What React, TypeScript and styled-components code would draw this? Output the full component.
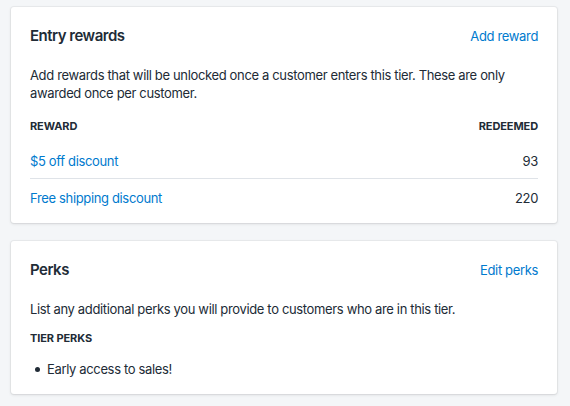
import React from "react";
import styled, { createGlobalStyle } from "styled-components";

const Global = createGlobalStyle`
  html, body { margin: 0; padding: 0; background: #f4f6f8; }
  body { font-family: Inter, "Noto Sans", sans-serif; color: #212b36; -webkit-font-smoothing: antialiased; }
`;

const Page = styled.div`
  display: flex;
  flex-direction: column;
  gap: 18px;
  padding: 7px 13px 12px 11px;
`;

const Card = styled.section<{ $bottom: number }>`
  background: #fff;
  border-radius: 3px;
  box-shadow: 0 0 0 1px rgba(63, 63, 68, 0.05), 0 1px 3px 0 rgba(63, 63, 68, 0.15);
  padding: 20px 19px ${(p) => p.$bottom}px 19px;
`;

const Header = styled.div`
  display: flex;
  justify-content: space-between;
  align-items: center;
  height: 18px;
`;

const Title = styled.h2`
  margin: 0;
  font-size: 15px;
  font-weight: 600;
  line-height: 18px;
  letter-spacing: -0.5px;
`;

const Link = styled.a`
  color: #007ace;
  font-size: 13px;
  line-height: 18px;
  letter-spacing: -0.35px;
  text-decoration: none;
  cursor: pointer;
`;

const Text = styled.p<{ $top: number }>`
  margin: ${(p) => p.$top}px 0 0;
  font-size: 13px;
  line-height: 18px;
  letter-spacing: -0.35px;
  color: #212b36;
`;

const Subheading = styled.div<{ $top: number }>`
  margin-top: ${(p) => p.$top}px;
  display: flex;
  justify-content: space-between;
  font-size: 11px;
  font-weight: 700;
  letter-spacing: -0.1px;
  line-height: 16px;
  text-transform: uppercase;
`;

const Rows = styled.div`
  margin-top: 10px;
  display: flex;
  flex-direction: column;
`;

const Row = styled.div`
  display: flex;
  justify-content: space-between;
  align-items: center;
  padding: 8px 0 8px;
  font-size: 13px;
  line-height: 18px;
  & + & {
    border-top: 1px solid #dfe3e8;
    padding-top: 10px;
  }
`;

const Value = styled.span`
  color: #212b36;
  letter-spacing: -0.35px;
`;

const List = styled.ul`
  list-style: none;
  margin: 14px 0 0;
  padding: 0;
`;

const Item = styled.li`
  display: flex;
  align-items: center;
  gap: 7px;
  padding-left: 5px;
  font-size: 13px;
  line-height: 18px;
  letter-spacing: -0.35px;
  &::before {
    content: "";
    width: 5px;
    height: 5px;
    border-radius: 50%;
    background: #212b36;
  }
`;

const rewards = [
  { name: "$5 off discount", redeemed: 93 },
  { name: "Free shipping discount", redeemed: 220 },
];

export default function App() {
  return (
    <>
      <Global />
      <Page>
        <Card $bottom={8}>
          <Header>
            <Title>Entry rewards</Title>
            <Link>Add reward</Link>
          </Header>
          <Text $top={21}>
            Add rewards that will be unlocked once a customer enters this tier. These are only
            awarded once per customer.
          </Text>
          <Subheading $top={16}>
            <span>Reward</span>
            <span>Redeemed</span>
          </Subheading>
          <Rows>
            {rewards.map((r) => (
              <Row key={r.name}>
                <Link>{r.name}</Link>
                <Value>{r.redeemed}</Value>
              </Row>
            ))}
          </Rows>
        </Card>
        <Card $bottom={16}>
          <Header>
            <Title>Perks</Title>
            <Link>Edit perks</Link>
          </Header>
          <Text $top={21}>
            List any additional perks you will provide to customers who are in this tier.
          </Text>
          <Subheading $top={12}>
            <span>Tier perks</span>
          </Subheading>
          <List>
            <Item>Early access to sales!</Item>
          </List>
        </Card>
      </Page>
    </>
  );
}
